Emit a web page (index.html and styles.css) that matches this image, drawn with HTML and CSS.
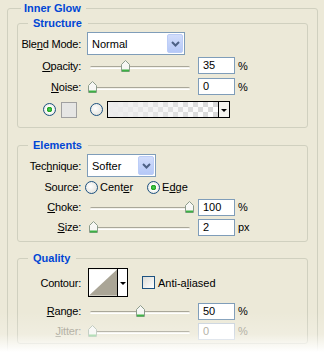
FILE: index.html
```html
<html>
<head>
<meta name="viewport" content="width=device-width, initial-scale=1">
<title>Inner Glow</title>
<link rel="stylesheet" href="styles.css">
</head>
<body>
<div class="panel">
<fieldset class="group">
	<legend>Inner Glow</legend>

	<fieldset class="sub structure">
		<legend>Structure</legend>
		<div class="row tall">
			<span class="label">Ble<u>n</u>d Mode:</span>
			<div class="combo blend"><span class="combo-text">Normal</span><span class="drop"><svg width="9" height="6" viewBox="0 0 9 6"><path d="M1 1 L4.5 4.5 L8 1" fill="none" stroke="#4d6185" stroke-width="2"/></svg></span></div>
		</div>
		<div class="row r21">
			<span class="label"><u>O</u>pacity:</span>
			<div class="slider"><span class="track"></span><svg class="thumb" style="left: 34px" width="9" height="12" viewBox="0 0 9 12"><path d="M4.5 .5 L8.5 4.5 V11.5 H.5 V4.5 Z" fill="#f7f7f4" stroke="#8c9c8c"/><path d="M1 10.5 H8" stroke="#3cb043" stroke-width="2"/></svg></div>
			<span class="num">35</span><span class="unit">%</span>
		</div>
		<div class="row r21">
			<span class="label"><u>N</u>oise:</span>
			<div class="slider"><span class="track"></span><svg class="thumb" style="left: 1px" width="9" height="12" viewBox="0 0 9 12"><path d="M4.5 .5 L8.5 4.5 V11.5 H.5 V4.5 Z" fill="#f7f7f4" stroke="#8c9c8c"/><path d="M1 10.5 H8" stroke="#3cb043" stroke-width="2"/></svg></div>
			<span class="num">0</span><span class="unit">%</span>
		</div>
		<div class="row colors">
			<span class="radio on first"></span>
			<span class="swatch"></span>
			<span class="radio second"></span>
			<div class="picker gradient"><span class="gradient-fill"></span><span class="picker-arrow"></span></div>
		</div>
	</fieldset>

	<fieldset class="sub elements">
		<legend>Elements</legend>
		<div class="row tall">
			<span class="label">Tec<u>h</u>nique:</span>
			<div class="combo technique"><span class="combo-text">Softer</span><span class="drop"><svg width="9" height="6" viewBox="0 0 9 6"><path d="M1 1 L4.5 4.5 L8 1" fill="none" stroke="#4d6185" stroke-width="2"/></svg></span></div>
		</div>
		<div class="row">
			<span class="label tight">Source:</span>
			<span class="radio"></span><span class="option">Cent<u>e</u>r</span>
			<span class="radio on edge"></span><span class="option">E<u>d</u>ge</span>
		</div>
		<div class="row">
			<span class="label"><u>C</u>hoke:</span>
			<div class="slider"><span class="track"></span><svg class="thumb" style="left: 98px" width="9" height="12" viewBox="0 0 9 12"><path d="M4.5 .5 L8.5 4.5 V11.5 H.5 V4.5 Z" fill="#f7f7f4" stroke="#8c9c8c"/><path d="M1 10.5 H8" stroke="#3cb043" stroke-width="2"/></svg></div>
			<span class="num">100</span><span class="unit">%</span>
		</div>
		<div class="row">
			<span class="label"><u>S</u>ize:</span>
			<div class="slider"><span class="track"></span><svg class="thumb" style="left: 2px" width="9" height="12" viewBox="0 0 9 12"><path d="M4.5 .5 L8.5 4.5 V11.5 H.5 V4.5 Z" fill="#f7f7f4" stroke="#8c9c8c"/><path d="M1 10.5 H8" stroke="#3cb043" stroke-width="2"/></svg></div>
			<span class="num">2</span><span class="unit">px</span>
		</div>
	</fieldset>

	<fieldset class="sub quality">
		<legend>Quality</legend>
		<div class="row contour-row">
			<span class="label">Contour:</span>
			<div class="picker contour"><svg class="curve" width="29" height="27" viewBox="0 0 29 27"><rect width="29" height="27" fill="#fff"/><path d="M0 27 L29 0 V27 Z" fill="#aaa596"/></svg><span class="picker-arrow"></span></div>
			<span class="check"></span><span class="option">Anti-a<u>l</u>iased</span>
		</div>
		<div class="row">
			<span class="label"><u>R</u>ange:</span>
			<div class="slider"><span class="track"></span><svg class="thumb" style="left: 49px" width="9" height="12" viewBox="0 0 9 12"><path d="M4.5 .5 L8.5 4.5 V11.5 H.5 V4.5 Z" fill="#f7f7f4" stroke="#8c9c8c"/><path d="M1 10.5 H8" stroke="#3cb043" stroke-width="2"/></svg></div>
			<span class="num">50</span><span class="unit">%</span>
		</div>
		<div class="row off">
			<span class="label"><u>J</u>itter:</span>
			<div class="slider"><span class="track"></span><svg class="thumb" style="left: 1px" width="9" height="12" viewBox="0 0 9 12"><path d="M4.5 .5 L8.5 4.5 V11.5 H.5 V4.5 Z" fill="#f7f7f4" stroke="#b8c4b8"/><path d="M1 10.5 H8" stroke="#9ad49e" stroke-width="2"/></svg></div>
			<span class="num">0</span><span class="unit">%</span>
		</div>
	</fieldset>
</fieldset>
</div>
</body>
</html>
```

FILE: styles.css
```css
* {
box-sizing: border-box;
}

html, body {
margin: 0;
}

body {
background: #ece9d8;
font-family: "Liberation Sans", Arial, sans-serif;
font-size: 11px;
color: black;
}

.panel {
position: relative;
width: 324px;
height: 354px;
padding: 2px 6px 0 7px;
overflow: hidden;
}

/* the screenshot fades out to white at the bottom */
.panel::after {
content: "";
position: absolute;
left: 0;
right: 0;
top: 312px;
bottom: 0;
background: linear-gradient(rgba(255, 255, 255, 0), rgba(255, 255, 255, 0.2) 22px, #fff 40px);
}

.group {
margin: 0;
min-width: 0;
padding: 2px 9px 8px;
border: 1px solid #d0d0bf;
border-radius: 3px;
}

legend {
font-weight: bold;
color: #0046d5;
line-height: 13px;
margin-left: 4px;
padding: 0 5px 0 3px;
}

.sub {
margin: 0;
min-width: 0;
padding: 2px 0 5px;
border: 1px solid #d0d0bf;
border-radius: 3px;
}

.sub legend {
margin-left: 10px;
padding: 0 6px 0 5px;
}

.elements {
margin-top: 11px;
padding-bottom: 4px;
}

.quality {
margin-top: 10px;
padding: 3px 0 2px;
}

.row {
display: flex;
align-items: center;
height: 20px;
white-space: nowrap;
}

.row.tall {
height: 23px;
}

.row.r21 {
height: 21px;
}

.row.colors {
height: 25px;
}

.label {
flex: none;
width: 63px;
margin-right: 6px;
text-align: right;
letter-spacing: -0.2px;
}

.label.tight {
margin-right: 4px;
}

.combo {
display: flex;
align-items: stretch;
height: 23px;
padding: 1px;
border: 1px solid #7f9db9;
background: white;
}

.combo.blend {
width: 98px;
}

.combo.technique {
width: 69px;
}

.combo-text {
flex: 1;
padding-left: 3px;
line-height: 21px;
}

.drop {
display: flex;
align-items: center;
justify-content: center;
width: 16px;
border: 1px solid #bccdf7;
border-radius: 2px;
background: linear-gradient(#d2ddfb, #b5c8f7);
}

.slider {
position: relative;
flex: none;
width: 106px;
align-self: stretch;
}

.track {
position: absolute;
left: 3px;
right: 3px;
top: 50%;
height: 3px;
border-top: 1px solid #a9a799;
border-bottom: 1px solid #fff;
border-radius: 2px;
background: #f2f1ea;
}

.thumb {
position: absolute;
top: calc(50% - 6px);
}

.num {
flex: none;
width: 37px;
height: 17px;
margin-left: 5px;
padding-left: 4px;
line-height: 15px;
border: 1px solid #7f9db9;
background: white;
}

.unit {
margin-left: 3px;
}

.off .label,
.off .num,
.off .unit {
color: #a5a293;
}

.off .num {
border-color: #c9d3de;
}

.radio {
flex: none;
width: 13px;
height: 13px;
border: 1px solid #1c5180;
border-radius: 50%;
background: radial-gradient(circle at 40% 40%, #fff, #e4e3dc 80%);
}

.radio.on {
background: radial-gradient(circle, #4fd35a 0, #21a121 2.5px, #fff 3px, #e4e3dc 80%);
}

.radio.first {
margin-left: 25px;
}

.radio.second {
margin-left: 13px;
}

.radio.edge {
margin-left: 14px;
}

.option {
margin-left: 2px;
}

.swatch {
flex: none;
width: 16px;
height: 16px;
margin-left: 5px;
border: 1px solid #a0a0a0;
background: #e6e6e4;
}

.picker {
display: flex;
flex: none;
border: 1px solid black;
}

.picker.gradient {
width: 123px;
height: 17px;
margin-left: 4px;
}

.gradient-fill {
flex: 1;
border-right: 1px solid black;
background-color: #fff;
background-image:
  linear-gradient(to right, #ececec, rgba(236, 236, 236, 0)),
  linear-gradient(45deg, #d8d8d8 25%, transparent 25%, transparent 75%, #d8d8d8 75%),
  linear-gradient(45deg, #d8d8d8 25%, transparent 25%, transparent 75%, #d8d8d8 75%);
background-size: 100% 100%, 10px 10px, 10px 10px;
background-position: 0 0, 0 0, 5px 5px;
}

.picker-arrow {
position: relative;
width: 10px;
background: #f4f3ee;
}

.picker-arrow::before {
content: "";
position: absolute;
left: 2px;
top: calc(50% - 1px);
border-left: 3px solid transparent;
border-right: 3px solid transparent;
border-top: 3px solid black;
}

.contour-row {
height: 29px;
margin-bottom: 4px;
}

.picker.contour {
width: 40px;
height: 29px;
margin-left: 1px;
}

.curve {
display: block;
border-right: 1px solid black;
}

.picker.contour .picker-arrow {
width: 9px;
background: white;
}

.check {
flex: none;
width: 13px;
height: 13px;
margin-left: 14px;
border: 1px solid #1c5180;
background: linear-gradient(135deg, #dcdcd7, #fff);
}

.check + .option {
margin-left: 3px;
}
```
